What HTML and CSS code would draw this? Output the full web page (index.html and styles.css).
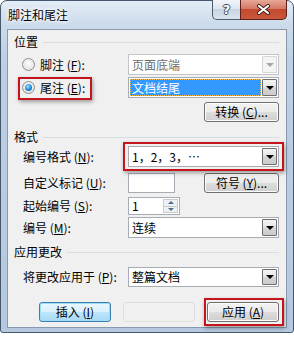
FILE: index.html
```html
<!DOCTYPE html>
<html lang="zh-CN">
<head>
    <meta charset="UTF-8">
    <meta name="viewport" content="width=device-width, initial-scale=1.0">
    <title>脚注和尾注</title>
    <link rel="stylesheet" href="styles.css">
</head>
<body>
    <div class="window">
        <div class="titlebar">
            <span class="title">脚注和尾注</span>
            <div class="caption">
                <div class="cap help"><span class="q">?</span></div>
                <div class="cap close">
                    <svg width="15" height="11" viewBox="0 0 15 11">
                        <path d="M3 2 L12 9 M12 2 L3 9" stroke="#3a1a14" stroke-width="4" stroke-linecap="round"/>
                        <path d="M3 2 L12 9 M12 2 L3 9" stroke="#fff" stroke-width="2.2" stroke-linecap="round"/>
                    </svg>
                </div>
            </div>
        </div>

        <div class="client">
            <div class="group">
                <span>位置</span><span class="rule"></span>
            </div>

            <div class="row h21 mt3">
                <div class="lbl radio-lbl">
                    <span class="radio"></span>
                    <span>脚注 (<u>F</u>):</span>
                </div>
                <div class="combo disabled">
                    <span class="combo-text">页面底端</span>
                    <span class="arrow-btn"><span class="tri"></span></span>
                </div>
            </div>

            <div class="row h21 mt2">
                <div class="lbl radio-lbl">
                    <span class="pick mark">
                        <span class="radio checked"></span>
                        <span>尾注 (<u>E</u>):</span>
                    </span>
                </div>
                <div class="combo">
                    <span class="combo-text selected">文档结尾</span>
                    <span class="arrow-btn"><span class="tri"></span></span>
                </div>
            </div>

            <div class="row h20 mt4 right">
                <button class="btn">转换 (<u>C</u>)...</button>
            </div>

            <div class="group mt6">
                <span>格式</span><span class="rule"></span>
            </div>

            <div class="row h21">
                <div class="lbl">编号格式 (<u>N</u>):</div>
                <div class="combo mark mark-combo">
                    <span class="combo-text">1，2，3，…</span>
                    <span class="arrow-btn"><span class="tri"></span></span>
                </div>
            </div>

            <div class="row h20 mt6">
                <div class="lbl">自定义标记 (<u>U</u>):</div>
                <div class="textbox"></div>
                <button class="btn push-right">符号 (<u>Y</u>)...</button>
            </div>

            <div class="row h18 mt4">
                <div class="lbl">起始编号 (<u>S</u>):</div>
                <div class="spin">
                    <span class="spin-text">1</span>
                    <span class="spin-btns">
                        <span class="spin-part"><span class="tri-up"></span></span>
                        <span class="spin-part"><span class="tri-down"></span></span>
                    </span>
                </div>
            </div>

            <div class="row h21 mt2">
                <div class="lbl">编号 (<u>M</u>):</div>
                <div class="combo">
                    <span class="combo-text">连续</span>
                    <span class="arrow-btn"><span class="tri"></span></span>
                </div>
            </div>

            <div class="group mt5">
                <span>应用更改</span><span class="rule"></span>
            </div>

            <div class="row h20 mt6">
                <div class="lbl">将更改应用于 (<u>P</u>):</div>
                <div class="combo">
                    <span class="combo-text">整篇文档</span>
                    <span class="arrow-btn"><span class="tri"></span></span>
                </div>
            </div>

            <div class="row h20 mt15 right actions">
                <button class="btn wide default">插入 (<u>I</u>)</button>
                <button class="btn wide ghost">取消</button>
                <button class="btn wide mark mark-btn">应用 (<u>A</u>)</button>
            </div>
        </div>
    </div>
</body>
</html>
```

FILE: styles.css
```css
* {
    box-sizing: border-box;
}
body {
    margin: 0;
    background: #fff;
    font-family: "Noto Sans CJK SC", "Liberation Sans", sans-serif;
    font-size: 12px;
    color: #000;
}
u {
    text-decoration: underline;
}

/* window frame */
.window {
    width: 294px;
    height: 333px;
    border: 1px solid #46586b;
    border-radius: 7px 7px 3px 3px;
    background: linear-gradient(180deg, #e3ecf6 0, #cddcec 22px, #bccfe4 60px, #b4c8df 100%);
    padding: 0 6px 4px;
    display: flex;
    flex-direction: column;
}
.titlebar {
    height: 28px;
    display: flex;
    justify-content: space-between;
    align-items: flex-start;
    padding-left: 1px;
}
.title {
    margin-top: 6px;
    line-height: 16px;
    text-shadow: 0 0 5px #fff, 0 0 3px #fff, 0 0 2px #fff;
}
.caption {
    display: flex;
    margin-top: -1px;
}
.cap {
    height: 20px;
    border: 1px solid #4d5b6d;
    border-top: none;
    display: flex;
    align-items: center;
    justify-content: center;
}
.help {
    width: 28px;
    border-right: none;
    border-radius: 0 0 0 5px;
    background: linear-gradient(180deg, #f1f5f9 0, #dbe4ee 50%, #c8d5e3 50%, #d9e3ed 100%);
}
.q {
    font-family: "DejaVu Sans", sans-serif;
    font-weight: bold;
    font-size: 13px;
    color: #fff;
    line-height: 14px;
    text-shadow: 1px 0 0 #3a4656, -1px 0 0 #3a4656, 0 1px 0 #3a4656, 0 -1px 0 #3a4656;
}
.close {
    width: 47px;
    border-color: #5c2219;
    border-radius: 0 0 5px 0;
    background: linear-gradient(180deg, #e7a898 0, #d47a64 45%, #c24a30 50%, #c9573c 100%);
}

/* client area */
.client {
    flex: 1;
    background: #f0f0f0;
    border: 1px solid #8799ac;
    padding: 3px 7px 0 6px;
}
.group {
    height: 18px;
    display: flex;
    align-items: center;
    gap: 5px;
    line-height: 16px;
}
.rule {
    flex: 1;
    height: 1px;
    background: #d5dfe5;
    margin-top: 1px;
}
.row {
    display: flex;
    align-items: center;
    line-height: 16px;
}
.right {
    justify-content: flex-end;
}
.h18 { height: 18px; }
.h20 { height: 20px; }
.h21 { height: 21px; }
.mt2 { margin-top: 2px; }
.mt3 { margin-top: 3px; }
.mt4 { margin-top: 4px; }
.mt5 { margin-top: 5px; }
.mt6 { margin-top: 6px; }
.mt15 { margin-top: 15px; }

.lbl {
    width: 114px;
    padding-left: 9px;
    flex-shrink: 0;
    white-space: nowrap;
}
.radio-lbl {
    padding-left: 8px;
    display: flex;
    align-items: center;
    gap: 5px;
    height: 100%;
}
.pick {
    display: flex;
    align-items: center;
    gap: 5px;
    height: 100%;
    width: 64px;
    white-space: nowrap;
}
.radio {
    width: 13px;
    height: 13px;
    border-radius: 50%;
    border: 1px solid #8f8f8f;
    background: radial-gradient(circle at 50% 40%, #fdfdfd 0, #e8e8e8 60%, #d6d6d6 100%);
    display: inline-flex;
    align-items: center;
    justify-content: center;
    flex-shrink: 0;
}
.radio.checked::before {
    content: "";
    width: 7px;
    height: 7px;
    border-radius: 50%;
    background: radial-gradient(circle at 40% 35%, #9fe3ff 0, #2a8fd6 50%, #0d4f8e 100%);
}

/* red highlight boxes */
.mark {
    position: relative;
}
.mark::after {
    content: "";
    position: absolute;
    border: 2px solid #c3161c;
    box-shadow: 1px 2px 4px rgba(0, 0, 0, 0.35);
    pointer-events: none;
}
.pick::after {
    top: 0;
    bottom: -2px;
    left: -4px;
    right: -6px;
}
.mark-combo::after {
    inset: -5px -6px;
}
.mark-btn::after {
    inset: -5px -6px -5px -4px;
}

/* combo box */
.combo {
    width: 151px;
    height: 100%;
    border: 1px solid #a7adb5;
    background: #fff;
    display: flex;
    align-items: stretch;
    padding: 1px;
}
.combo-text {
    flex: 1;
    padding-left: 2px;
    display: flex;
    align-items: center;
}
.combo-text.selected {
    background: #3399ff;
    color: #fff;
    outline: 1px dotted #f5b84a;
    outline-offset: -1px;
    margin-right: 1px;
}
.arrow-btn {
    width: 15px;
    border: 1px solid #6f6f6f;
    border-radius: 1px;
    background: linear-gradient(180deg, #f3f3f3 0, #e6e6e6 50%, #d6d6d6 50%, #cbcbcb 100%);
    display: flex;
    align-items: center;
    justify-content: center;
}
.tri {
    width: 0;
    height: 0;
    border-left: 4px solid transparent;
    border-right: 4px solid transparent;
    border-top: 4px solid #000;
}
.combo.disabled {
    border-color: #c2c6cb;
    color: #6d6d6d;
}
.combo.disabled .arrow-btn {
    border-color: #d6d6d6;
    background: #f4f4f4;
}
.combo.disabled .tri {
    border-top-color: #a6a6a6;
}

/* text and spin boxes */
.textbox {
    width: 47px;
    height: 100%;
    border: 1px solid #a7adb5;
    background: #fff;
}
.push-right {
    margin-left: auto;
}
.spin {
    width: 52px;
    height: 100%;
    border: 1px solid #a7adb5;
    background: #fff;
    display: flex;
    padding: 1px;
}
.spin-text {
    flex: 1;
    padding-left: 2px;
    display: flex;
    align-items: center;
}
.spin-btns {
    width: 15px;
    display: flex;
    flex-direction: column;
    border: 1px solid #c8ccd1;
    background: #eef0f3;
}
.spin-part {
    flex: 1;
    display: flex;
    align-items: center;
    justify-content: center;
}
.spin-part + .spin-part {
    border-top: 1px solid #c8ccd1;
}
.tri-up {
    border-left: 3px solid transparent;
    border-right: 3px solid transparent;
    border-bottom: 3px solid #4d6a95;
}
.tri-down {
    border-left: 3px solid transparent;
    border-right: 3px solid transparent;
    border-top: 3px solid #4d6a95;
}

/* buttons */
.btn {
    width: 75px;
    height: 100%;
    padding: 0;
    font: inherit;
    line-height: 16px;
    color: #000;
    white-space: nowrap;
    border: 1px solid #707070;
    border-radius: 3px;
    background: linear-gradient(180deg, #f2f2f2 0, #ebebeb 50%, #dddddd 50%, #cfcfcf 100%);
    box-shadow: inset 0 0 0 1px #fcfcfc;
}
.actions {
    gap: 12px;
}
.btn.wide {
    width: 72px;
}
.btn.default {
    border-color: #3c7fb1;
    box-shadow: inset 0 0 0 1px #9fdcf6;
    background: linear-gradient(180deg, #eaf6fd 0, #d9f0fc 50%, #bee6fd 50%, #a7d9f5 100%);
}
.btn.ghost {
    color: transparent;
    background: #f0f0f0;
    border-color: #c8c8c8;
    box-shadow: none;
    opacity: 0.45;
}
```
